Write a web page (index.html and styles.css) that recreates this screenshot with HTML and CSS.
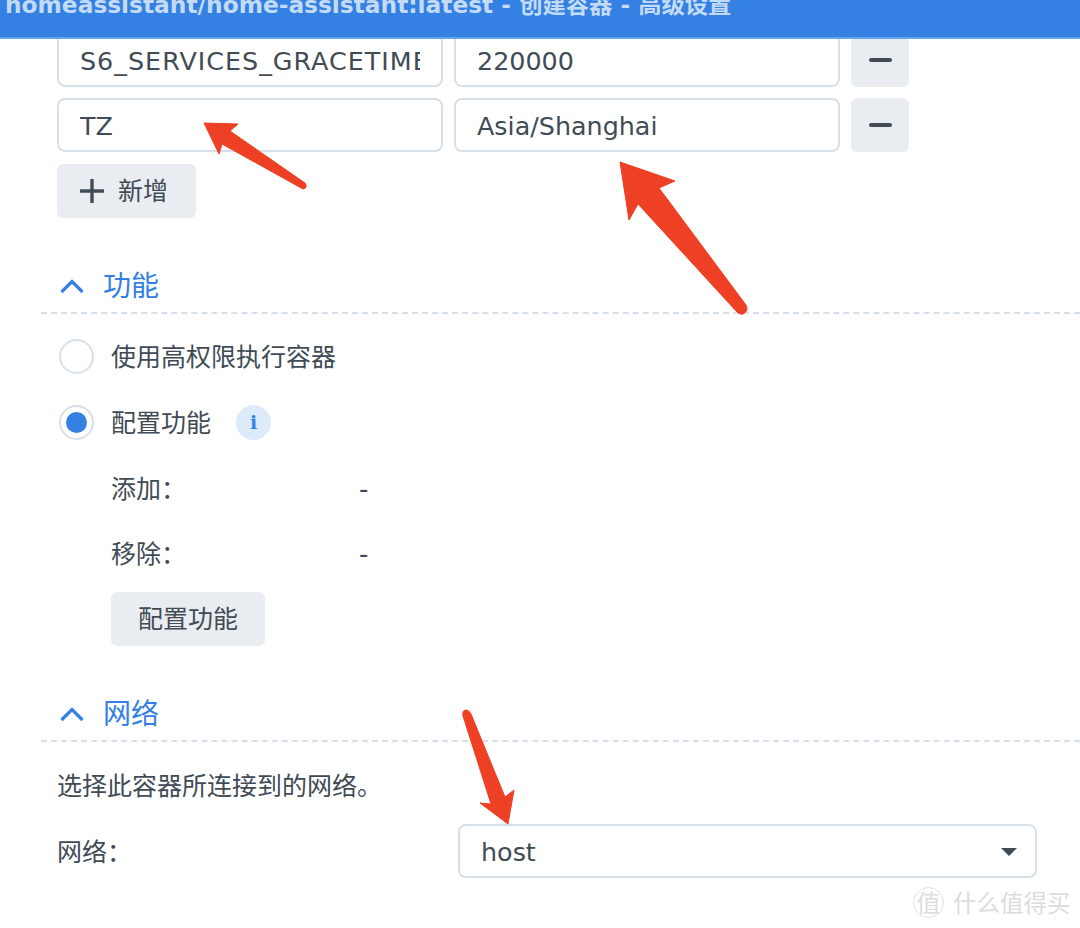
FILE: index.html
```html
<!DOCTYPE html>
<html>
<head>
  <meta http-equiv="Content-Type" content="text/html;charset=UTF-8">
  <title>创建容器 - 高级设置</title>
  <link rel="stylesheet" href="styles.css">
</head>
<body>
  <div class="titlebar"><div class="titlebar-text">homeassistant/home-assistant:latest - 创建容器 - 高级设置</div></div>

  <div class="content">
    <div class="env-row env-row-first">
      <input class="field field-long" value="S6_SERVICES_GRACETIME" readonly>
      <input class="field" value="220000" readonly>
      <div class="btn btn-square"><span class="minus"></span></div>
    </div>
    <div class="env-row">
      <input class="field" value="TZ" readonly>
      <input class="field" value="Asia/Shanghai" readonly>
      <div class="btn btn-square"><span class="minus"></span></div>
    </div>
    <div class="btn btn-add">
      <svg class="plus" width="24" height="24" viewBox="0 0 24 24"><path d="M12 1v22M1 12h22" stroke="#414b55" stroke-width="3.4" stroke-linecap="round"/></svg>
      <span class="cjk-up">新增</span>
    </div>

    <div class="section-head">
      <svg width="24" height="15" viewBox="0 0 24 15"><path d="M1.5 13 12 2.5 22.500 13" fill="none" stroke="#3480e3" stroke-width="3.2"/></svg>
      <span class="cjk-up">功能</span>
    </div>
    <div class="radio-row radio-row-first"><span class="radio"></span><span class="radio-text">使用高权限执行容器</span></div>
    <div class="radio-row">
      <span class="radio radio-on"></span><span class="radio-text">配置功能</span>
      <span class="info">i</span>
    </div>
    <div class="cap-row cap-row-first"><span class="cap-label">添加：</span><span class="cap-value">-</span></div>
    <div class="cap-row"><span class="cap-label">移除：</span><span class="cap-value">-</span></div>
    <div class="btn btn-cap"><span class="cjk-up">配置功能</span></div>

    <div class="section-head">
      <svg width="24" height="15" viewBox="0 0 24 15"><path d="M1.5 13 12 2.5 22.500 13" fill="none" stroke="#3480e3" stroke-width="3.2"/></svg>
      <span class="cjk-up">网络</span>
    </div>
    <div class="net-desc">选择此容器所连接到的网络。</div>
    <div class="net-row">
      <span class="net-label">网络：</span>
      <div class="select"><span>host</span><span class="caret"></span></div>
    </div>
  </div>

  <!-- annotations drawn over the screenshot -->
  <svg class="arrows" width="1080" height="928" viewBox="0 0 1080 928">
    <path fill="#ee4024" stroke="#ee4024" stroke-width="1" stroke-linejoin="round" d="M204 123 238 124 230 131 305 183Q308 188 303 189L222 144 219 154Z"/>
    <path fill="#ee4024" stroke="#ee4024" stroke-width="1" stroke-linejoin="round" d="M620 162 675 181 659 188 746 305Q749 311 743 314 740 315 737 312L638 204 629 220Z"/>
    <path fill="#ee4024" stroke="#ee4024" stroke-width="1" stroke-linejoin="round" d="M508 824 480 803 491 804 463 716Q462 710 466 710 469 710 471 714L505 797 514 790Z"/>
  </svg>

  <div class="watermark">
    <span class="watermark-logo">值</span>
    <span>什么值得买</span>
  </div>
</body>
</html>
```

FILE: styles.css
```css
html, body {height: 100%}
body {margin: 0; height: 928px; overflow: hidden; position: relative; background: #fff; color: #414b55; font: 25.4px/34px "DejaVu Sans", "Noto Sans CJK SC", sans-serif;}

.titlebar {height: 37px; background: #3480e3; border-bottom: 2px solid #6aa3ec; overflow: hidden; position: relative; z-index: 1;}
.titlebar-text {margin: -12px 0 0 5px; font-size: 23.3px; font-weight: bold; white-space: nowrap; color: #c4dbf7;}

.content {padding-left: 57px; margin-top: -6px;}

.env-row {display: flex; gap: 11px; margin-top: 11px;}
.env-row-first {margin-top: 0;}
.field {box-sizing: border-box; width: 386px; height: 54px; padding: 2px 21px 0; border: 2px solid #d7e0ea; border-radius: 8px; outline: none; background: #fff; color: #414b55; font: 25.4px "DejaVu Sans", sans-serif;}
.field-long {letter-spacing: 1px;}

.btn {box-sizing: border-box; display: flex; align-items: center; height: 54px; border-radius: 6px; background: #e9edf2; font: 25px/34px "Noto Sans CJK SC", sans-serif;}
.btn-square {width: 58px; justify-content: center;}
.minus {width: 23px; height: 4px; border-radius: 2px; background: #414b55;}
.btn-add {width: 139px; margin-top: 12px; padding-left: 23px;}
.plus {margin-right: 14px;}
.btn-cap {width: 154px; margin: 23px 0 0 54px; justify-content: center;}

/* Noto CJK sits low in its line box */
.cjk-up {padding-bottom: 5px;}

.section-head {display: flex; align-items: center; gap: 19px; height: 52px; margin: 42px 0 0 -16px; padding-left: 19px; border-bottom: 2px dashed #d7e0ea; color: #3480e3; font: 28px/40px "Noto Sans CJK SC", sans-serif;}

.radio-row {display: flex; align-items: center; height: 35px; margin: 31px 0 0 2px; font: 25px/34px "Noto Sans CJK SC", sans-serif;}
.radio-row-first {margin-top: 25px;}
.radio-text {padding-bottom: 3px;}
.radio {box-sizing: border-box; width: 35px; height: 35px; margin-right: 17px; border: 2px solid #d7e0ea; border-radius: 50%; background: #fff; display: flex; align-items: center; justify-content: center;}
.radio-on::after {content: ""; width: 21px; height: 21px; border-radius: 50%; background: #3480e3;}
.info {width: 35px; height: 35px; margin-left: 25px; border-radius: 50%; background: #dceafa; color: #3480e3; text-align: center; font: bold 19px/35px "DejaVu Serif", serif;}

.cap-row {display: flex; height: 34px; margin: 31px 0 0 54px; font: 25px/34px "Noto Sans CJK SC", sans-serif;}
.cap-row-first {margin-top: 30px;}
.cap-label {width: 248px;}
.cap-value {padding-top: 2px; font: 26px/34px "DejaVu Sans", sans-serif;}

.net-desc {margin-top: 25px; font: 25px/34px "Noto Sans CJK SC", sans-serif;}
.net-row {display: flex; align-items: center; margin-top: 23px;}
.net-label {width: 401px; padding-bottom: 3px; font: 25px/34px "Noto Sans CJK SC", sans-serif;}
.select {box-sizing: border-box; width: 579px; height: 54px; padding: 2px 18px 0 21px; display: flex; align-items: center; justify-content: space-between; border: 2px solid #d7e0ea; border-radius: 8px;}
.caret {width: 0; height: 0; border-left: 8px solid transparent; border-right: 8px solid transparent; border-top: 8px solid #414b55;}

.arrows {position: absolute; left: 0; top: 0; z-index: 2;}

.watermark {position: absolute; left: 913px; top: 886px; display: flex; align-items: center; gap: 9px; color: #dcdcdc; font: 23.5px/32px "Noto Sans CJK SC", sans-serif;}
.watermark-logo {width: 29px; height: 29px; border: 1px solid #e2e2e2; border-radius: 50%; line-height: 28px; text-align: center; font-size: 24px;}
```
